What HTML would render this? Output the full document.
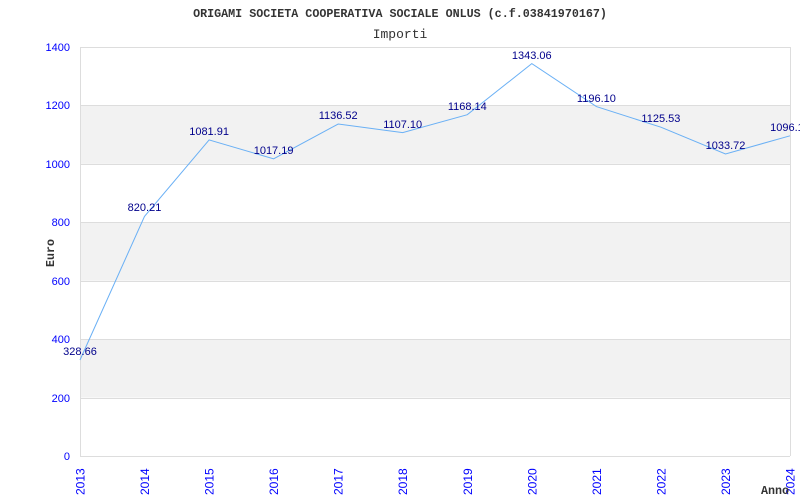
<!DOCTYPE html>
<html><head><meta charset="utf-8"><style>html,body{margin:0;padding:0;background:#fff}svg{display:block}</style></head><body>
<svg width="800" height="500" xmlns="http://www.w3.org/2000/svg">
<rect width="800" height="500" fill="#fff"/>
<text x="400" y="17" text-anchor="middle" font-family="Liberation Mono, monospace" font-weight="bold" font-size="11.7" fill="#333">ORIGAMI SOCIETA COOPERATIVA SOCIALE ONLUS (c.f.03841970167)</text>
<text x="400" y="38" text-anchor="middle" font-family="Liberation Mono, monospace" font-size="13" fill="#333">Importi</text>
<g fill="#f2f2f2"><rect x="80" y="105.4" width="710" height="58.4"/><rect x="80" y="222.3" width="710" height="58.4"/><rect x="80" y="339.1" width="710" height="58.4"/></g>
<g stroke="#ddd" stroke-width="1"><line x1="80" y1="47.5" x2="790" y2="47.5"/><line x1="80" y1="105.5" x2="790" y2="105.5"/><line x1="80" y1="164.5" x2="790" y2="164.5"/><line x1="80" y1="222.5" x2="790" y2="222.5"/><line x1="80" y1="281.5" x2="790" y2="281.5"/><line x1="80" y1="339.5" x2="790" y2="339.5"/><line x1="80" y1="398.5" x2="790" y2="398.5"/><line x1="80.5" y1="47" x2="80.5" y2="456"/><line x1="790.5" y1="47" x2="790.5" y2="456"/><line x1="80" y1="456.5" x2="790" y2="456.5"/></g>
<g font-family="Liberation Sans, sans-serif" font-size="11" fill="#00f" text-anchor="end">
<text x="70" y="51">1400</text><text x="70" y="109">1200</text><text x="70" y="168">1000</text><text x="70" y="226">800</text><text x="70" y="285">600</text><text x="70" y="343">400</text><text x="70" y="402">200</text><text x="70" y="460">0</text>
</g>
<g font-family="Liberation Sans, sans-serif" font-size="12" fill="#00f" text-anchor="start">
<text transform="translate(84.5,495) rotate(-90)">2013</text>
<text transform="translate(149,495) rotate(-90)">2014</text>
<text transform="translate(213.6,495) rotate(-90)">2015</text>
<text transform="translate(278.1,495) rotate(-90)">2016</text>
<text transform="translate(342.7,495) rotate(-90)">2017</text>
<text transform="translate(407.2,495) rotate(-90)">2018</text>
<text transform="translate(471.8,495) rotate(-90)">2019</text>
<text transform="translate(536.3,495) rotate(-90)">2020</text>
<text transform="translate(600.9,495) rotate(-90)">2021</text>
<text transform="translate(665.4,495) rotate(-90)">2022</text>
<text transform="translate(730,495) rotate(-90)">2023</text>
<text transform="translate(794.5,495) rotate(-90)">2024</text>
</g>
<text x="761" y="494" font-family="Liberation Mono, monospace" font-weight="bold" font-size="11.7" fill="#333">Anno</text>
<text transform="translate(54,253) rotate(-90)" text-anchor="middle" font-family="Liberation Mono, monospace" font-weight="bold" font-size="11.7" fill="#333">Euro</text>
<polyline fill="none" stroke="#6ab0f5" stroke-width="1" points="80,360 144.5,216.4 209.1,139.9 273.6,158.8 338.2,124 402.7,132.6 467.3,114.7 531.8,63.6 596.4,106.6 660.9,127.2 725.5,154 790,135.8"/>
<g font-family="Liberation Sans, sans-serif" font-size="11" fill="#00008b" text-anchor="middle">
<text x="80" y="355">328.66</text>
<text x="144.5" y="211">820.21</text>
<text x="209.1" y="135">1081.91</text>
<text x="273.6" y="154">1017.19</text>
<text x="338.2" y="119">1136.52</text>
<text x="402.7" y="128">1107.10</text>
<text x="467.3" y="110">1168.14</text>
<text x="531.8" y="59">1343.06</text>
<text x="596.4" y="102">1196.10</text>
<text x="660.9" y="122">1125.53</text>
<text x="725.5" y="149">1033.72</text>
<text x="790" y="131">1096.10</text>
</g>
</svg>
</body></html>
